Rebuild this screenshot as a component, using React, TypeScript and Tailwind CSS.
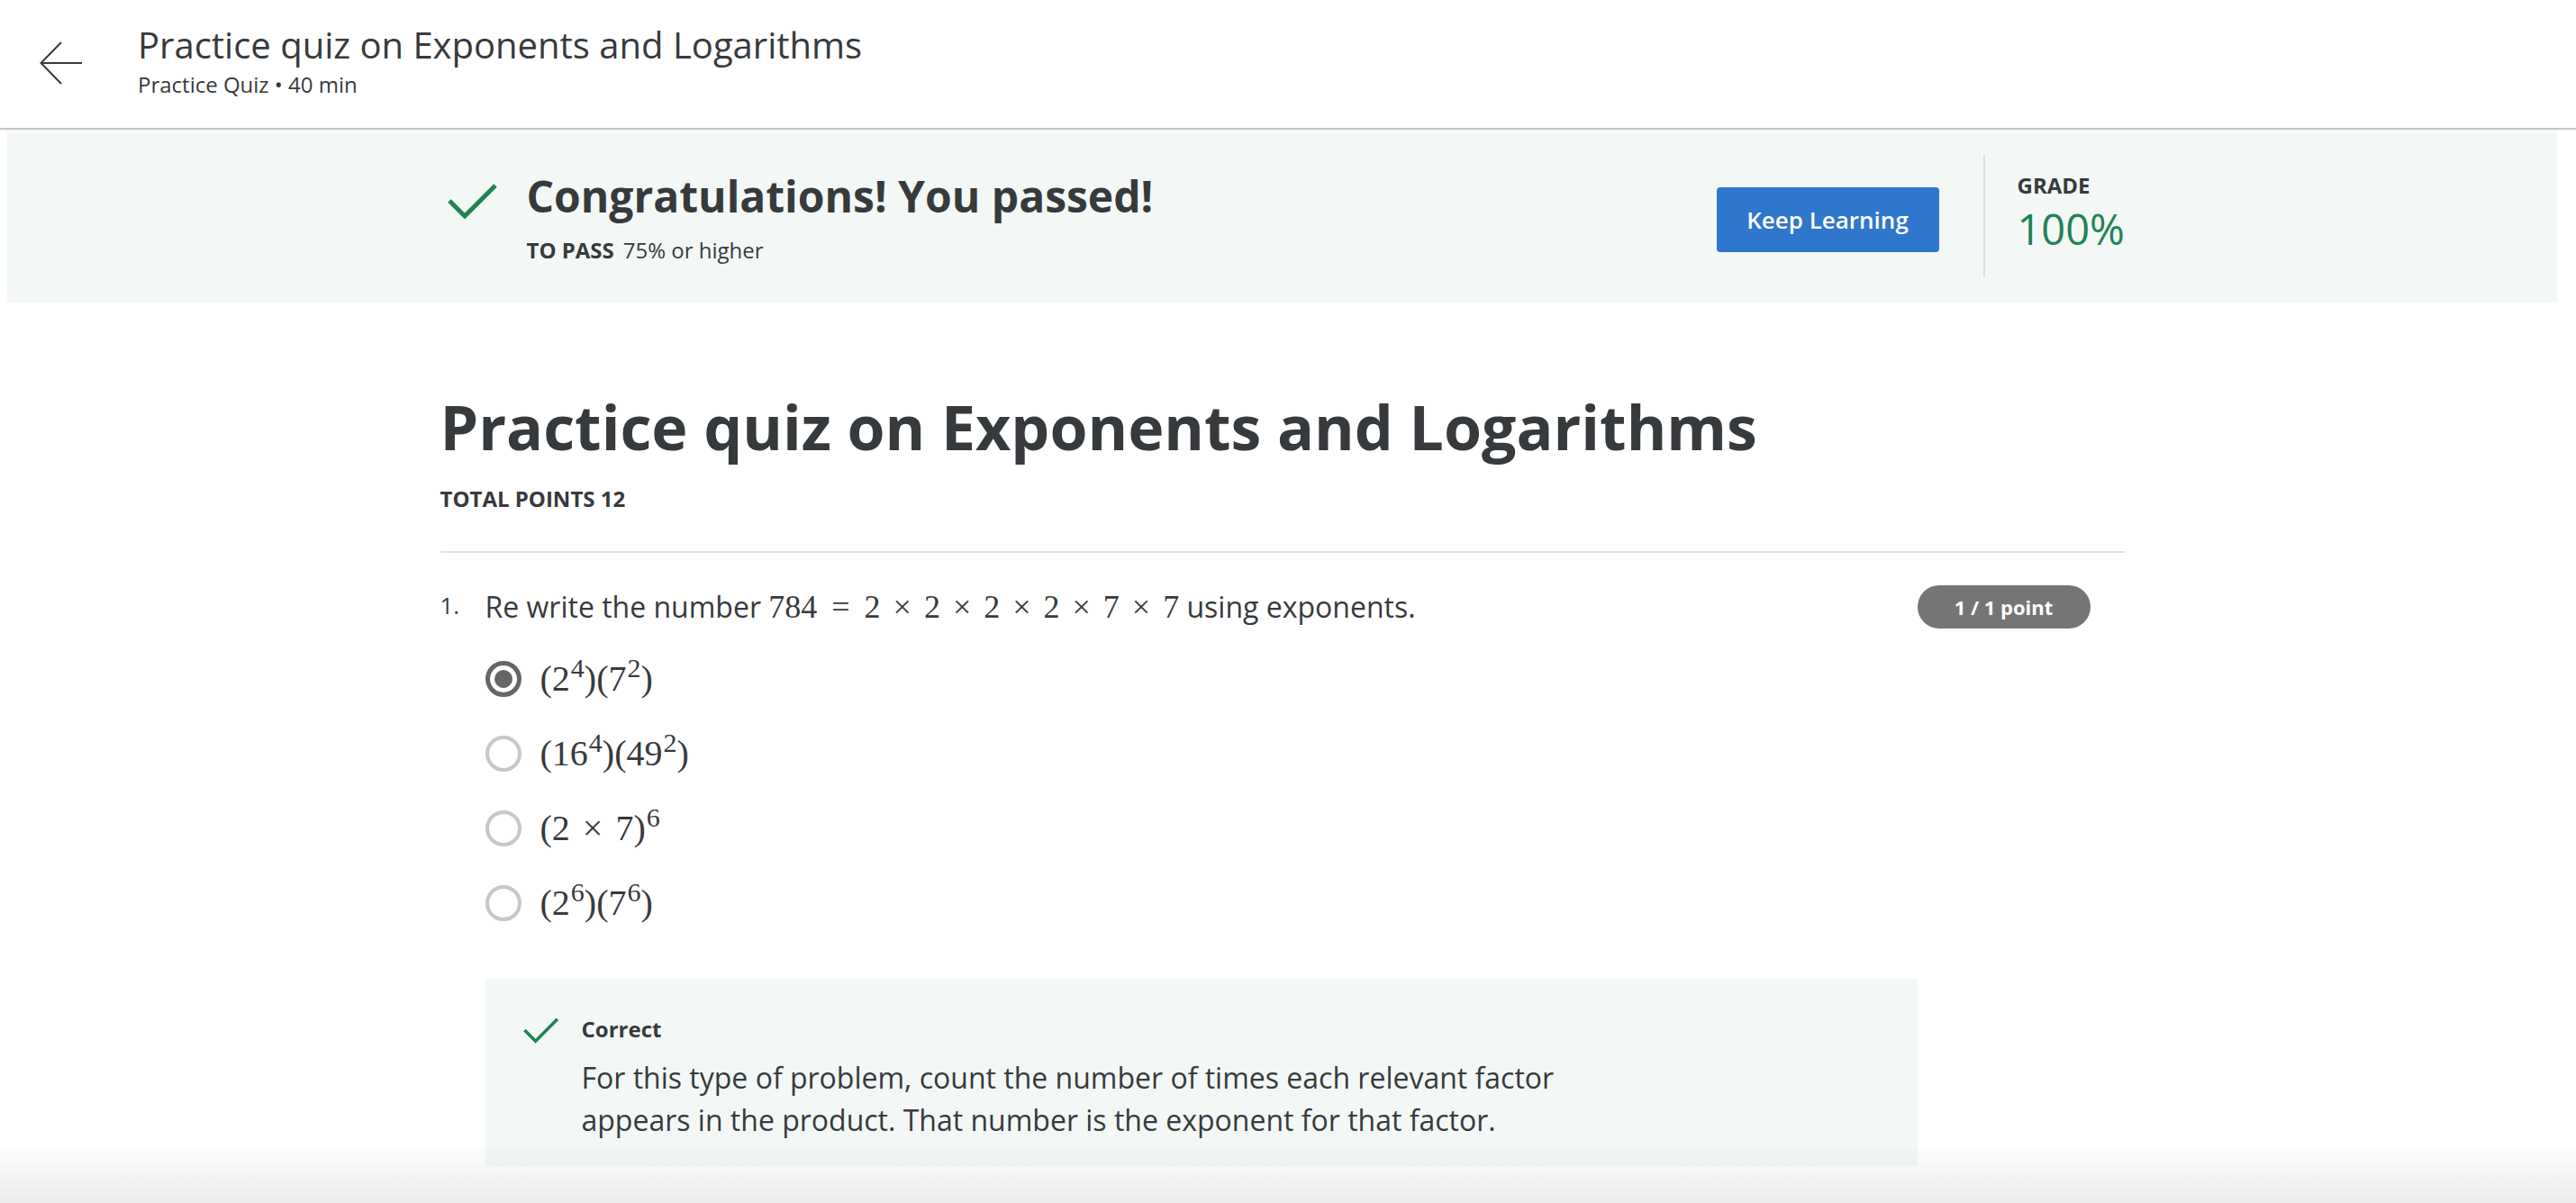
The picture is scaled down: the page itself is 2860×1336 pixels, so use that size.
import React from 'react';

const mathFont = "font-['Liberation_Serif','DejaVu_Serif',serif]";

function CheckMark({ className, stroke = 5 }: { className?: string; stroke?: number }) {
  return (
    <svg viewBox="0 0 56 40" className={className} fill="none">
      <path d="M2 20 L19 37 L53 3" stroke="#1f8354" strokeWidth={stroke} strokeLinecap="butt" strokeLinejoin="miter" />
    </svg>
  );
}

function Op({ children }: { children: React.ReactNode }) {
  return <span className="mx-[14px]">{children}</span>;
}

function Radio({ checked }: { checked?: boolean }) {
  if (checked) {
    return (
      <span className="w-[40px] h-[40px] rounded-full border-[5px] border-[#666666] flex items-center justify-center shrink-0">
        <span className="w-[20px] h-[20px] rounded-full bg-[#666666]" />
      </span>
    );
  }
  return <span className="w-[40px] h-[40px] rounded-full border-[4px] border-[#c7c7c7] shrink-0" />;
}

export default function App() {
  // answer choices, first one is the picked one
  const options: { id: number; checked?: boolean; body: React.ReactNode }[] = [
    { id: 1, checked: true, body: <>(2<sup className="ml-[1px]">4</sup>)(7<sup className="ml-[1px]">2</sup>)</> },
    { id: 2, body: <>(16<sup className="ml-[1px]">4</sup>)(49<sup className="ml-[1px]">2</sup>)</> },
    { id: 3, body: <>(2<Op>×</Op>7)<sup className="ml-[1px]">6</sup></> },
    { id: 4, body: <>(2<sup className="ml-[1px]">6</sup>)(7<sup className="ml-[1px]">6</sup>)</> },
  ];

  return (
    <div className="relative h-[1336px] overflow-hidden bg-white font-['Open_Sans','Liberation_Sans',sans-serif] text-[#373a3c]">
      {/* Top bar */}
      <header className="h-[144px] border-b-2 border-[#c4c4c4] flex items-start">
        <svg viewBox="0 0 48 48" className="ml-[44px] mt-[46px] w-[48px] h-[48px] shrink-0" fill="none">
          <path d="M47 24 H2 M24 1 L1.5 24 L24 47" stroke="#373a3c" strokeWidth="2" />
        </svg>
        <div className="ml-[61px] pt-[26px]">
          <h1 className="text-[40px] leading-[48px] font-normal">Practice quiz on Exponents and Logarithms</h1>
          <p className="mt-[6px] text-[24px] leading-[28px]">Practice Quiz • 40 min</p>
        </div>
      </header>

      <div className="ml-[8px] mr-[21px]">
        {/* Result banner */}
        <section className="h-[192px] bg-[#f3f8f6]">
          <div className="w-[1870px] mx-auto h-full flex items-start">
            <CheckMark className="ml-[8px] mt-[59px] w-[56px] h-[40px] shrink-0" />
            <div className="ml-[32px] pt-[44px]">
              <h2 className="text-[48px] leading-[60px] font-bold">Congratulations! You passed!</h2>
              <p className="mt-[15px] text-[24px] leading-[30px]">
                <span className="font-bold uppercase mr-[10px]">To pass</span>75% or higher
              </p>
            </div>
            <div className="ml-auto flex items-start">
              <button className="mt-[64px] w-[247px] h-[72px] rounded-[4px] bg-[#2f76cd] text-white text-[26px] font-semibold">
                Keep Learning
              </button>
              <div className="ml-[49px] mt-[28px] w-[2px] h-[136px] bg-[#dddddd]" />
              <div className="w-[155px] pl-[36px] pt-[46px]">
                <p className="text-[24px] leading-[32px] font-bold uppercase">Grade</p>
                <p className="text-[47px] leading-[64px] text-[#1f8354]">100%</p>
              </div>
            </div>
          </div>
        </section>

        <main className="w-[1870px] mx-auto">
          <h2 className="mt-[98px] text-[68px] leading-[80px] font-bold">Practice quiz on Exponents and Logarithms</h2>
          <p className="mt-[25px] text-[24px] leading-[30px] font-bold uppercase">Total points 12</p>
          <div className="mt-[43px] h-[2px] bg-[#e1e1e1]" />

          <div className="mt-[36px] flex items-start">
            <div className="w-[50px] text-[26px] leading-[44px]">1.</div>
            <div className="w-[1590px]">
              <div className="h-[48px] flex items-center text-[32px] whitespace-nowrap">
                Re write the number&nbsp;
                <span className={`${mathFont} text-[36px] leading-[48px]`}>
                  784<span className="mx-[16px]">=</span>2<Op>×</Op>2<Op>×</Op>2<Op>×</Op>2<Op>×</Op>7<Op>×</Op>7
                </span>
                &nbsp;using exponents.
              </div>

              <div className="mt-[14px] flex flex-col">
                {options.map((o) => (
                  <label key={o.id} className="h-[83px] flex items-center gap-[21px]">
                    <Radio checked={o.checked} />
                    <span className={`${mathFont} text-[40px] leading-[48px]`}>{o.body}</span>
                  </label>
                ))}
              </div>

              {/* Feedback */}
              <div className="mt-[43px] bg-[#f3f8f6] pt-[41px] pb-[28px] pl-[42px] flex items-start">
                <CheckMark className="w-[40px] h-[32px] shrink-0" stroke={5} />
                <div className="ml-[25px]">
                  <p className="text-[24px] leading-[30px] font-bold">Correct</p>
                  <p className="mt-[15px] max-w-[1180px] text-[32px] leading-[47px]">
                    For this type of problem, count the number of times each relevant factor appears in the product. That number is the exponent for that factor.
                  </p>
                </div>
              </div>
            </div>
            <div className="flex-1">
              <span className="w-[192px] h-[48px] rounded-full bg-[#757575] text-white text-[22px] font-bold flex items-center justify-center">
                1 / 1 point
              </span>
            </div>
          </div>
        </main>
      </div>

      <div className="pointer-events-none absolute inset-x-0 bottom-0 h-[66px] bg-linear-to-b from-black/0 to-black/[0.08]" />
    </div>
  );
}
